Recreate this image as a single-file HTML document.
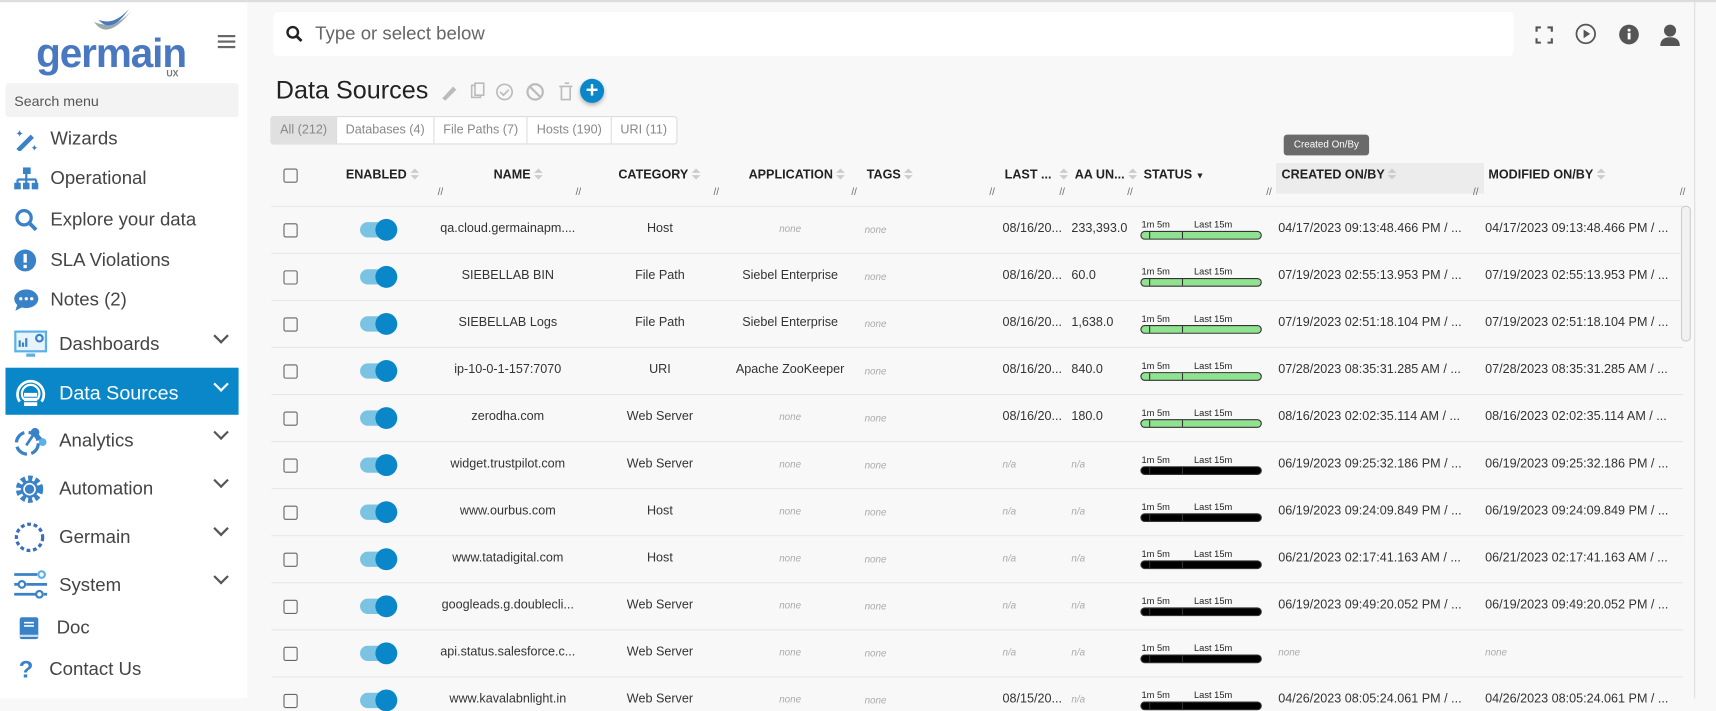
<!DOCTYPE html><html><head><meta charset="utf-8"><style>
*{box-sizing:border-box;margin:0;padding:0}
body{width:1716px;height:698px;overflow:hidden;font-family:"Liberation Sans",sans-serif;background:#f8f8f8;color:#333}
#w{position:absolute;left:0;top:0;width:1568px;height:638px;transform:scale(1.09439);transform-origin:0 0}
.abs{position:absolute}
#side{left:0;top:0;width:226px;height:638px;background:#fff;border-top:2px solid #ddd}
.nav{position:absolute;left:12px;font-size:17px;color:#444;display:flex;align-items:center}
.nav svg{margin-right:10px}
.chev{position:absolute;left:197px;width:10px;height:10px;border-right:2px solid #555;border-bottom:2px solid #555;transform:rotate(45deg)}
#top{border-top:2px solid #ddd;left:226px;top:0;width:1342px;height:2px}
.cell{position:absolute;font-size:11.5px;color:#333;white-space:nowrap}
.hd{position:absolute;font-size:11.5px;font-weight:bold;color:#222;top:154px}
.srt{display:inline-block;vertical-align:middle;margin-left:3px;width:8px;height:11px;position:relative}
.srt:before{content:"";position:absolute;left:0;top:0;border:4px solid transparent;border-bottom-color:#ccc;border-top:0}
.srt:after{content:"";position:absolute;left:0;top:6px;border:4px solid transparent;border-top-color:#ccc;border-bottom:0}
.rz{position:absolute;top:170px;font-size:9px;color:#666}
.cb{position:absolute;left:259px;width:13px;height:13px;border:1.5px solid #666;border-radius:2px}
.tg{position:absolute;left:329px;width:34px;height:14px;border-radius:7px;background:#7bc3e3}
.tg:after{content:"";position:absolute;right:0;top:-3px;width:20px;height:20px;border-radius:50%;background:#0a87c8}
.none{font-style:italic;color:#aaa;font-size:9px}
.rl{position:absolute;left:248px;width:1290px;height:1px;background:#e6e6e6}
.st{position:absolute;left:1042px;width:111px}
.st .l{font-size:8.5px;color:#222;height:10px;position:relative}
.st .b{height:8px;border:1px solid #333;border-radius:4px;background:#8fe28f;position:relative;margin-top:1px}
.st .b:before{content:"";position:absolute;left:7px;top:0;bottom:0;width:1px;background:#333}
.st .b:after{content:"";position:absolute;left:37px;top:0;bottom:0;width:1px;background:#333}
.st.k .b{background:#000}
</style></head><body><div id="w">
<div id="top" class="abs"></div>
<div id="side" class="abs">
 <svg class="abs" style="left:84px;top:4px" width="40" height="32"><path d="M2 14 Q14 32 36 4 Q20 22 2 14Z" fill="#9aa"/><path d="M6 12 Q18 26 34 2 Q20 18 6 12Z" fill="#4a78c0"/></svg>
 <div class="abs" style="left:33px;top:26px;font-size:37px;font-weight:bold;color:#4a78c0;letter-spacing:-1px">germain</div>
 <div class="abs" style="left:152px;top:61px;font-size:8px;color:#777;font-weight:bold">UX</div>
 <div class="abs" style="left:199px;top:30px;width:16px;height:2px;background:#666;box-shadow:0 5px 0 #666,0 10px 0 #666"></div>
 <div class="abs" style="left:5px;top:74px;width:213px;height:31px;background:#f3f3f3;border-radius:3px;font-size:13px;color:#555;padding:9px 8px">Search menu</div>
 <div class="nav" style="top:114px"><svg width="24" height="22"><path d="M3 20 L16 7 L19 10 L6 23Z" fill="#3a82c8"/><text x="2" y="9" font-size="9" fill="#3a82c8">✦</text><text x="16" y="22" font-size="8" fill="#3a82c8">✦</text></svg>Wizards</div>
 <div class="nav" style="top:150px"><svg width="24" height="22"><rect x="9" y="1" width="7" height="6" fill="#3a82c8"/><path d="M12 7v5M4 12h17M4 12v4M12 12v4M21 12v4" stroke="#3a82c8" stroke-width="2"/><rect x="1" y="15" width="6" height="6" fill="#3a82c8"/><rect x="9" y="15" width="6" height="6" fill="#3a82c8"/><rect x="17" y="15" width="6" height="6" fill="#3a82c8"/></svg>Operational</div>
 <div class="nav" style="top:188px"><svg width="24" height="22"><circle cx="10" cy="9" r="6.5" stroke="#3a82c8" stroke-width="3" fill="none"/><path d="M15 14l6 6" stroke="#3a82c8" stroke-width="3.5"/></svg>Explore your data</div>
 <div class="nav" style="top:225px"><svg width="24" height="22"><circle cx="11" cy="11" r="10" fill="#3a82c8"/><rect x="9.5" y="5" width="3" height="8" fill="#fff"/><rect x="9.5" y="15" width="3" height="3" fill="#fff"/></svg>SLA Violations</div>
 <div class="nav" style="top:261px"><svg width="24" height="22"><ellipse cx="12" cy="10" rx="11" ry="8.5" fill="#3a82c8"/><path d="M4 15 L2 21 L10 17Z" fill="#3a82c8"/><circle cx="7" cy="10" r="1.5" fill="#fff"/><circle cx="12" cy="10" r="1.5" fill="#fff"/><circle cx="17" cy="10" r="1.5" fill="#fff"/></svg>Notes (2)</div>
 <div class="nav" style="top:299px"><svg width="32" height="28"><rect x="1" y="1" width="30" height="20" fill="#5ab0e8"/><rect x="3" y="3" width="26" height="16" fill="#e8f4fc"/><path d="M6 16V10M9 16V12M12 16V8" stroke="#3a82c8" stroke-width="2"/><circle cx="24" cy="8" r="3" stroke="#3a82c8" fill="none" stroke-width="2"/><rect x="12" y="22" width="8" height="3" fill="#5ab0e8"/></svg>Dashboards</div><div class="chev" style="top:300px"></div>
 <div class="abs" style="left:5px;top:334px;width:213px;height:43px;background:#0a87c8"></div>
 <div class="nav" style="top:343px;color:#fff;font-size:18px"><svg width="32" height="28"><path d="M6 22 A12 12 0 1 1 26 22" stroke="#fff" stroke-width="2.5" fill="none"/><path d="M10 20 A8 8 0 1 1 22 20" stroke="#fff" stroke-width="2" fill="none"/><rect x="10" y="14" width="12" height="12" fill="#fff"/><path d="M10 18h12M10 22h12" stroke="#0a87c8"/></svg>Data Sources</div><div class="chev" style="top:344px;border-color:#fff"></div>
 <div class="nav" style="top:387px"><svg width="32" height="28"><circle cx="13" cy="16" r="10" stroke="#3a82c8" stroke-width="3" fill="none" stroke-dasharray="12 4"/><path d="M12 18 L20 6 L27 14" stroke="#3a82c8" stroke-width="2.5" fill="none"/><circle cx="20" cy="6" r="4" fill="#3a82c8"/><circle cx="27" cy="15" r="3.5" fill="#5ab0e8"/></svg>Analytics</div><div class="chev" style="top:388px"></div>
 <div class="nav" style="top:431px"><svg width="32" height="28"><circle cx="15" cy="14" r="10" stroke="#3a82c8" stroke-width="5" fill="none" stroke-dasharray="4 2.5"/><circle cx="15" cy="14" r="8" fill="#3a82c8"/><circle cx="15" cy="14" r="5" stroke="#fff" stroke-width="1.5" fill="none"/></svg>Automation</div><div class="chev" style="top:432px"></div>
 <div class="nav" style="top:475px"><svg width="32" height="28"><circle cx="15" cy="14" r="12" stroke="#3a6fc0" stroke-width="3" fill="none" stroke-dasharray="3.5 2.5"/></svg>Germain</div><div class="chev" style="top:476px"></div>
 <div class="nav" style="top:519px"><svg width="32" height="28"><path d="M1 4h21M1 13h4M12 13h19M1 22h20M28 22h3" stroke="#3a82c8" stroke-width="2.5"/><circle cx="26" cy="4" r="3" stroke="#5ab0e8" stroke-width="2" fill="none"/><circle cx="8" cy="13" r="3" stroke="#3a82c8" stroke-width="2" fill="none"/><circle cx="24" cy="22" r="3" stroke="#3a82c8" stroke-width="2" fill="none"/></svg>System</div><div class="chev" style="top:520px"></div>
 <div class="nav" style="top:561px;left:17px"><svg width="20" height="22"><rect x="1" y="1" width="17" height="20" rx="2" fill="#3a82c8"/><path d="M5 6h9M5 9h9" stroke="#fff" stroke-width="1.5"/><rect x="1" y="17" width="17" height="2" fill="#cde"/></svg>&nbsp;Doc</div>
 <div class="nav" style="top:597px;left:17px"><span style="color:#3a82c8;font-weight:bold;font-size:22px;width:28px">?</span>Contact Us</div>
</div>
<div class="abs" style="left:250px;top:11px;width:1133px;height:40px;background:#fff;border-radius:4px"></div>
<svg class="abs" style="left:261px;top:23px" width="16" height="16"><circle cx="6.5" cy="6.5" r="4.8" stroke="#222" stroke-width="2.2" fill="none"/><path d="M10 10l4.5 4.5" stroke="#222" stroke-width="2.6"/></svg>
<div class="abs" style="left:288px;top:21px;font-size:17px;color:#666">Type or select below</div>
<svg class="abs" style="left:1403px;top:24px" width="16" height="16"><path d="M1 5V1h4M11 1h4v4M15 11v4h-4M5 15H1v-4" stroke="#555" stroke-width="2" fill="none"/></svg>
<svg class="abs" style="left:1439px;top:21px" width="20" height="20"><circle cx="10" cy="10" r="8.5" stroke="#555" stroke-width="1.6" fill="none"/><path d="M8 6l6 4-6 4Z" fill="#555"/></svg>
<svg class="abs" style="left:1479px;top:22px" width="19" height="19"><circle cx="9.5" cy="9.5" r="9" fill="#555"/><rect x="8.3" y="8" width="2.6" height="6" fill="#fff"/><circle cx="9.6" cy="5.5" r="1.4" fill="#fff"/></svg>
<svg class="abs" style="left:1517px;top:22px" width="18" height="20"><circle cx="9" cy="6" r="5.5" fill="#555"/><path d="M0 20 Q0 12 9 12 Q18 12 18 20Z" fill="#555"/></svg>
<div class="abs" style="left:252px;top:69px;font-size:23px;color:#222">Data Sources</div>
<svg class="abs" style="left:402px;top:75px" width="130" height="18"><path d="M2 15 L12 4 L15 7 L5 17Z" fill="#bbb"/><rect x="29" y="3" width="8" height="11" stroke="#bbb" stroke-width="1.5" fill="none"/><rect x="32" y="1" width="8" height="11" stroke="#bbb" stroke-width="1.5" fill="#f8f8f8"/><circle cx="59" cy="9" r="7" stroke="#bbb" stroke-width="1.5" fill="none"/><path d="M55 9l3 3 5-5" stroke="#bbb" stroke-width="1.5" fill="none"/><circle cx="87" cy="9" r="7" stroke="#bbb" stroke-width="2" fill="none"/><path d="M82 4l10 10" stroke="#bbb" stroke-width="2"/><path d="M109 4h12M111 4v12h8V4M114 1h4" stroke="#bbb" stroke-width="1.5" fill="none"/></svg>
<div class="abs" style="left:530px;top:72px;width:22px;height:22px;border-radius:50%;background:#0a87c8;color:#fff;font-weight:bold;font-size:20px;text-align:center;line-height:22px;box-shadow:0 2px 4px rgba(0,0,0,.3)">+</div>
<div class="abs" style="left:247px;top:106px;height:26px;border:1px solid #ddd;border-radius:3px;display:flex;font-size:11.5px;color:#888;background:#fff">
 <div style="padding:6px 8px;background:#e0e0e0;border-right:1px solid #ddd">All (212)</div><div style="padding:6px 8px;border-right:1px solid #ddd">Databases (4)</div><div style="padding:6px 8px;border-right:1px solid #ddd">File Paths (7)</div><div style="padding:6px 8px;border-right:1px solid #ddd">Hosts (190)</div><div style="padding:6px 8px">URI (11)</div></div>
<div class="abs" style="left:1173px;top:123px;width:78px;height:19px;background:#6a6a6a;border-radius:3px;color:#fff;font-size:9px;text-align:center;line-height:19px">Created On/By</div>
<div class="abs" style="left:1166px;top:149px;width:190px;height:28px;background:#ececec"></div>
<div class="cb" style="top:154px"></div>
<div class="hd" style="left:316px">ENABLED<span class="srt"></span></div>
<div class="hd" style="left:451px">NAME<span class="srt"></span></div>
<div class="hd" style="left:565px">CATEGORY<span class="srt"></span></div>
<div class="hd" style="left:684px">APPLICATION<span class="srt"></span></div>
<div class="hd" style="left:792px">TAGS<span class="srt"></span></div>
<div class="hd" style="left:918px">LAST ...<span class="srt" style="margin-left:7px"></span></div>
<div class="hd" style="left:982px">AA UN...<span class="srt"></span></div>
<div class="hd" style="left:1045px">STATUS <span style="font-size:8px">▼</span></div>
<div class="hd" style="left:1171px">CREATED ON/BY<span class="srt"></span></div>
<div class="hd" style="left:1360px">MODIFIED ON/BY<span class="srt"></span></div>
<div class="rz" style="left:400px">//</div><div class="rz" style="left:526px">//</div><div class="rz" style="left:652px">//</div><div class="rz" style="left:778px">//</div><div class="rz" style="left:904px">//</div><div class="rz" style="left:968px">//</div><div class="rz" style="left:1030px">//</div><div class="rz" style="left:1157px">//</div><div class="rz" style="left:1346px">//</div><div class="rz" style="left:1535px">//</div>
<div class="abs" style="left:1536px;top:188px;width:9px;height:124px;border:1px solid #ccc;border-radius:4px;background:#f2f2f2"></div>
<div class="abs" style="left:1548px;top:0;width:1px;height:638px;background:#ddd"></div>
<div id="rows"></div>
</div>
<script>
var d=[["qa.cloud.germainapm....","Host","","08/16/20...","233,393.0",0,"04/17/2023 09:13:48.466 PM / ...","04/17/2023 09:13:48.466 PM / ..."],
["SIEBELLAB BIN","File Path","Siebel Enterprise","08/16/20...","60.0",0,"07/19/2023 02:55:13.953 PM / ...","07/19/2023 02:55:13.953 PM / ..."],
["SIEBELLAB Logs","File Path","Siebel Enterprise","08/16/20...","1,638.0",0,"07/19/2023 02:51:18.104 PM / ...","07/19/2023 02:51:18.104 PM / ..."],
["ip-10-0-1-157:7070","URI","Apache ZooKeeper","08/16/20...","840.0",0,"07/28/2023 08:35:31.285 AM / ...","07/28/2023 08:35:31.285 AM / ..."],
["zerodha.com","Web Server","","08/16/20...","180.0",0,"08/16/2023 02:02:35.114 AM / ...","08/16/2023 02:02:35.114 AM / ..."],
["widget.trustpilot.com","Web Server","","","",1,"06/19/2023 09:25:32.186 PM / ...","06/19/2023 09:25:32.186 PM / ..."],
["www.ourbus.com","Host","","","",1,"06/19/2023 09:24:09.849 PM / ...","06/19/2023 09:24:09.849 PM / ..."],
["www.tatadigital.com","Host","","","",1,"06/21/2023 02:17:41.163 AM / ...","06/21/2023 02:17:41.163 AM / ..."],
["googleads.g.doublecli...","Web Server","","","",1,"06/19/2023 09:49:20.052 PM / ...","06/19/2023 09:49:20.052 PM / ..."],
["api.status.salesforce.c...","Web Server","","","",1,"",""],
["www.kavalabnlight.in","Web Server","","08/15/20...","",1,"04/26/2023 08:05:24.061 PM / ...","04/26/2023 08:05:24.061 PM / ..."]];
var h="";d.forEach(function(r,i){var c=210+43*i,t=c-7;
h+='<div class="rl" style="top:'+(c-22)+'px"></div><div class="cb" style="top:'+(c-6)+'px"></div><div class="tg" style="top:'+(c-7)+'px"></div>';
h+='<div class="cell" style="left:394px;width:140px;text-align:center;top:'+t+'px">'+r[0]+'</div>';
h+='<div class="cell" style="left:553px;width:100px;text-align:center;top:'+t+'px">'+r[1]+'</div>';
h+='<div class="cell" style="left:662px;width:120px;text-align:center;top:'+t+'px">'+(r[2]||'<span class="none">none</span>')+'</div>';
h+='<div class="cell none" style="left:790px;top:'+(t+2)+'px">none</div>';
h+='<div class="cell" style="left:916px;top:'+t+'px">'+(r[3]||'<span class="none">n/a</span>')+'</div>';
h+='<div class="cell" style="left:979px;top:'+t+'px">'+(r[4]||'<span class="none">n/a</span>')+'</div>';
h+='<div class="st'+(r[5]?' k':'')+'" style="top:'+(c-10)+'px"><div class="l"><span style="position:absolute;left:1px">1m 5m</span><span style="position:absolute;left:49px">Last 15m</span></div><div class="b"></div></div>';
h+='<div class="cell" style="left:1168px;top:'+t+'px">'+(r[6]||'<span class="none">none</span>')+'</div>';
h+='<div class="cell" style="left:1357px;top:'+t+'px">'+(r[7]||'<span class="none">none</span>')+'</div>';});
document.getElementById("rows").innerHTML=h;
</script>
</body></html>
